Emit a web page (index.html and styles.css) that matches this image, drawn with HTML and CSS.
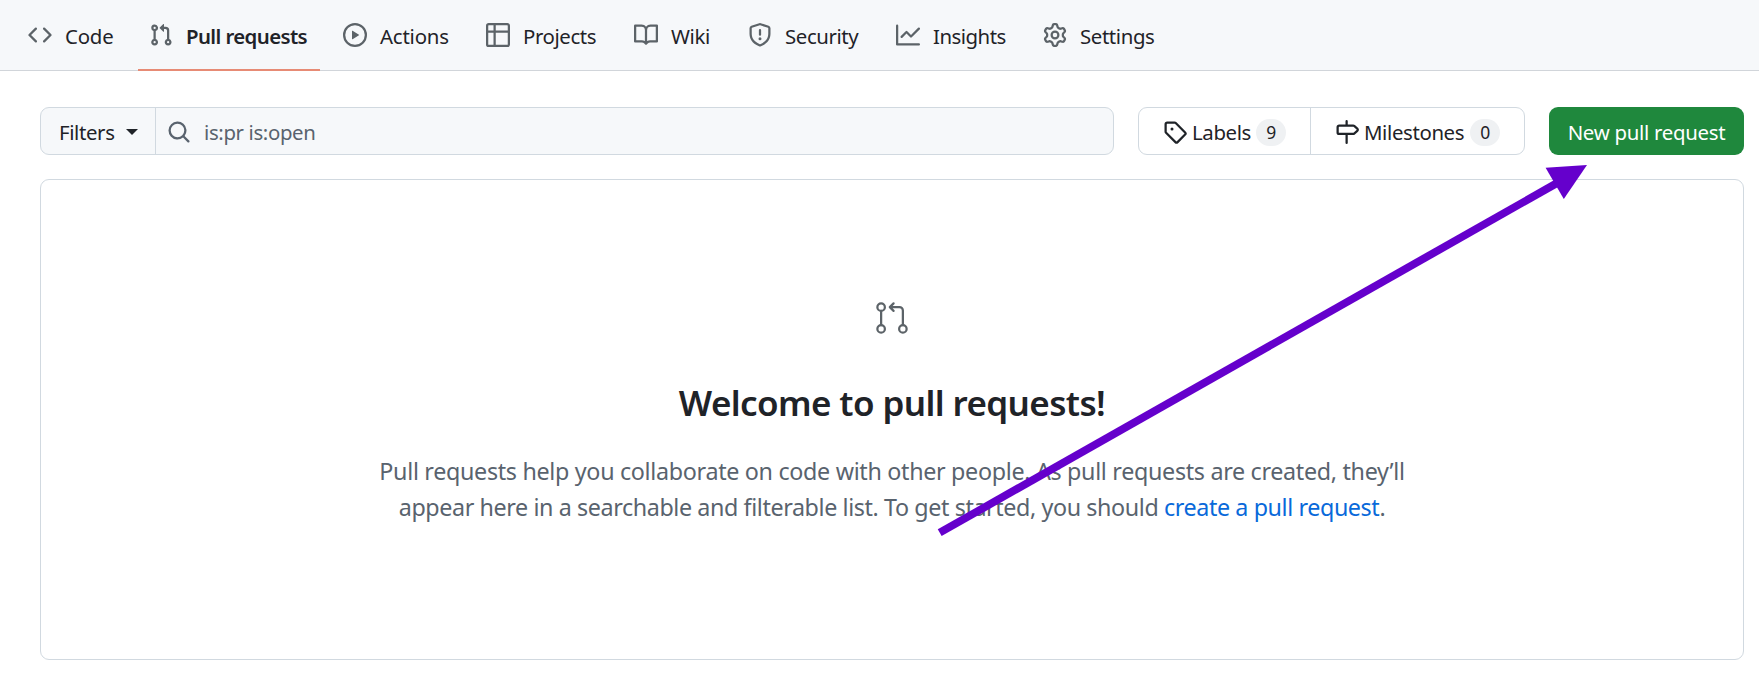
FILE: index.html
```html
<!DOCTYPE html>
<html lang="en">
<head>
<meta charset="utf-8">
<title>Pull requests</title>
<link rel="stylesheet" href="styles.css">
</head>
<body>
<nav class="nav">
  <a class="tab code"><svg class="icon" viewBox="0 0 16 16"><path d="m11.28 3.22 4.25 4.25a.75.75 0 0 1 0 1.06l-4.25 4.25a.749.749 0 0 1-1.275-.326.749.749 0 0 1 .215-.734L13.94 8l-3.72-3.72a.749.749 0 0 1 .326-1.275.749.749 0 0 1 .734.215Zm-6.56 0a.751.751 0 0 1 1.042.018.751.751 0 0 1 .018 1.042L2.06 8l3.72 3.72a.749.749 0 0 1-.326 1.275.749.749 0 0 1-.734-.215L.47 8.53a.75.75 0 0 1 0-1.06Z"/></svg><span>Code</span></a>
  <a class="tab pulls selected"><svg class="icon" viewBox="0 0 16 16"><path d="M1.5 3.25a2.25 2.25 0 1 1 3 2.122v5.256a2.251 2.251 0 1 1-1.5 0V5.372A2.25 2.25 0 0 1 1.5 3.25Zm5.677-.177L9.573.677A.25.25 0 0 1 10 .854V2.5h1A2.5 2.5 0 0 1 13.5 5v5.628a2.251 2.251 0 1 1-1.5 0V5a1 1 0 0 0-1-1h-1v1.646a.25.25 0 0 1-.427.177L7.177 3.427a.25.25 0 0 1 0-.354ZM3.75 2.5a.75.75 0 1 0 0 1.5.75.75 0 0 0 0-1.5Zm0 9.5a.75.75 0 1 0 0 1.5.75.75 0 0 0 0-1.5Zm8.25.75a.75.75 0 1 0 1.5 0 .75.75 0 0 0-1.5 0Z"/></svg><span>Pull requests</span></a>
  <a class="tab actions"><svg class="icon" viewBox="0 0 16 16"><path d="M8 0a8 8 0 1 1 0 16A8 8 0 0 1 8 0ZM1.5 8a6.5 6.5 0 1 0 13 0 6.5 6.5 0 0 0-13 0Zm4.879-2.773 4.264 2.559a.25.25 0 0 1 0 .428l-4.264 2.559A.25.25 0 0 1 6 10.559V5.442a.25.25 0 0 1 .379-.215Z"/></svg><span>Actions</span></a>
  <a class="tab projects"><svg class="icon" viewBox="0 0 16 16"><path d="M0 1.75C0 .784.784 0 1.75 0h12.5C15.216 0 16 .784 16 1.75v12.5A1.75 1.75 0 0 1 14.25 16H1.75A1.75 1.75 0 0 1 0 14.25ZM6.5 6.5v8h7.75a.25.25 0 0 0 .25-.25V6.5Zm8-1.5V1.75a.25.25 0 0 0-.25-.25H6.5V5Zm-13 1.5v7.75c0 .138.112.25.25.25H5v-8ZM5 5V1.5H1.75a.25.25 0 0 0-.25.25V5Z"/></svg><span>Projects</span></a>
  <a class="tab wiki"><svg class="icon" viewBox="0 0 16 16"><path d="M0 1.75A.75.75 0 0 1 .75 1h4.253c1.227 0 2.317.59 3 1.501A3.743 3.743 0 0 1 11.006 1h4.245a.75.75 0 0 1 .75.75v10.5a.75.75 0 0 1-.75.75h-4.507a2.25 2.25 0 0 0-1.591.659l-.622.621a.75.75 0 0 1-1.06 0l-.622-.621A2.25 2.25 0 0 0 5.258 13H.75a.75.75 0 0 1-.75-.75Zm7.251 10.324.004-5.073-.002-2.253A2.25 2.25 0 0 0 5.003 2.5H1.5v9h3.757a3.75 3.75 0 0 1 1.994.574ZM8.755 4.75l-.004 7.322a3.752 3.752 0 0 1 1.992-.572H14.5v-9h-3.495a2.25 2.25 0 0 0-2.25 2.25Z"/></svg><span>Wiki</span></a>
  <a class="tab security"><svg class="icon" viewBox="0 0 16 16"><path d="M7.467.133a1.748 1.748 0 0 1 1.066 0l5.25 1.68A1.75 1.75 0 0 1 15 3.48V7c0 1.566-.32 3.182-1.303 4.682-.983 1.498-2.585 2.813-5.032 3.855a1.697 1.697 0 0 1-1.33 0c-2.447-1.042-4.049-2.357-5.032-3.855C1.32 10.182 1 8.566 1 7V3.48a1.755 1.755 0 0 1 1.217-1.667Zm.61 1.429a.25.25 0 0 0-.153 0l-5.25 1.68a.25.25 0 0 0-.174.238V7c0 1.358.275 2.666 1.057 3.86.784 1.194 2.121 2.34 4.366 3.297a.196.196 0 0 0 .154 0c2.245-.956 3.582-2.104 4.366-3.298C13.225 9.666 13.5 8.36 13.5 7V3.48a.251.251 0 0 0-.174-.237l-5.25-1.68ZM8.75 4.75v3a.75.75 0 0 1-1.5 0v-3a.75.75 0 0 1 1.5 0ZM9 10.5a1 1 0 1 1-2 0 1 1 0 0 1 2 0Z"/></svg><span>Security</span></a>
  <a class="tab insights"><svg class="icon" viewBox="0 0 16 16"><path d="M1.5 1.75V13.5h13.75a.75.75 0 0 1 0 1.5H.75a.75.75 0 0 1-.75-.75V1.75a.75.75 0 0 1 1.5 0Zm14.28 2.53-5.25 5.25a.75.75 0 0 1-1.06 0L7 7.06 4.28 9.78a.751.751 0 0 1-1.042-.018.751.751 0 0 1-.018-1.042l3.25-3.25a.75.75 0 0 1 1.06 0L10 7.94l4.72-4.72a.751.751 0 0 1 1.042.018.751.751 0 0 1 .018 1.042Z"/></svg><span>Insights</span></a>
  <a class="tab settings"><svg class="icon" viewBox="0 0 16 16"><path d="M8 0a8.2 8.2 0 0 1 .701.031C9.444.095 9.99.645 10.16 1.29l.288 1.107c.018.066.079.158.212.224.231.114.454.243.668.386.123.082.233.09.299.071l1.103-.303c.644-.176 1.392.021 1.82.63.27.385.506.792.704 1.218.315.675.111 1.422-.364 1.891l-.814.806c-.049.048-.098.147-.088.294.016.257.016.515 0 .772-.01.147.038.246.088.294l.814.806c.475.469.679 1.216.364 1.891a7.977 7.977 0 0 1-.704 1.217c-.428.61-1.176.807-1.82.63l-1.102-.302c-.067-.019-.177-.011-.3.071a5.909 5.909 0 0 1-.668.386c-.133.066-.194.158-.211.224l-.29 1.106c-.168.646-.715 1.196-1.458 1.26a8.006 8.006 0 0 1-1.402 0c-.743-.064-1.289-.614-1.458-1.26l-.289-1.106c-.018-.066-.079-.158-.212-.224a5.738 5.738 0 0 1-.668-.386c-.123-.082-.233-.09-.299-.071l-1.103.303c-.644.176-1.392-.021-1.82-.63a8.12 8.12 0 0 1-.704-1.218c-.315-.675-.111-1.422.363-1.891l.815-.806c.05-.048.098-.147.088-.294a6.214 6.214 0 0 1 0-.772c.01-.147-.038-.246-.088-.294l-.815-.806C.635 6.045.431 5.298.746 4.623a7.92 7.92 0 0 1 .704-1.217c.428-.61 1.176-.807 1.82-.63l1.102.302c.067.019.177.011.3-.071.214-.143.437-.272.668-.386.133-.066.194-.158.211-.224l.29-1.106C6.009.645 6.556.095 7.299.03 7.53.01 7.764 0 8 0Zm-.571 1.525c-.036.003-.108.036-.137.146l-.289 1.105c-.147.561-.549.967-.998 1.189-.173.086-.34.183-.5.29-.417.278-.97.423-1.529.27l-1.103-.303c-.109-.03-.175.016-.195.045-.22.312-.412.644-.573.99-.014.031-.021.11.059.19l.815.806c.411.406.562.957.53 1.456a4.709 4.709 0 0 0 0 .582c.032.499-.119 1.05-.53 1.456l-.815.806c-.081.08-.073.159-.059.19.162.346.353.677.573.989.02.03.085.076.195.046l1.102-.303c.56-.153 1.113-.008 1.53.27.161.107.328.204.501.29.447.222.85.629.997 1.189l.289 1.105c.029.109.101.143.137.146a6.6 6.6 0 0 0 1.142 0c.036-.003.108-.036.137-.146l.289-1.105c.147-.561.549-.967.998-1.189.173-.086.34-.183.5-.29.417-.278.97-.423 1.529-.27l1.103.303c.109.029.175-.016.195-.045.22-.313.411-.644.573-.99.014-.031.021-.11-.059-.19l-.815-.806c-.411-.406-.562-.957-.53-1.456a4.709 4.709 0 0 0 0-.582c-.032-.499.119-1.05.53-1.456l.815-.806c.081-.08.073-.159.059-.19a6.464 6.464 0 0 0-.573-.989c-.02-.03-.085-.076-.195-.046l-1.102.303c-.56.153-1.113.008-1.53-.27a4.44 4.44 0 0 0-.501-.29c-.447-.222-.85-.629-.997-1.189l-.289-1.105c-.029-.11-.101-.143-.137-.146a6.6 6.6 0 0 0-1.142 0ZM11 8a3 3 0 1 1-6 0 3 3 0 0 1 6 0ZM9.5 8a1.5 1.5 0 1 0-3.001.001A1.5 1.5 0 0 0 9.5 8Z"/></svg><span>Settings</span></a>
</nav>

<main class="content">
  <div class="toolbar">
    <div class="search-group">
      <button class="filters"><span>Filters</span><i class="caret"></i></button>
      <div class="search"><svg class="icon" viewBox="0 0 16 16"><path d="M10.68 11.74a6 6 0 0 1-7.922-8.982 6 6 0 0 1 8.982 7.922l3.04 3.04a.749.749 0 0 1-.326 1.275.749.749 0 0 1-.734-.215ZM11.5 7a4.499 4.499 0 1 0-8.997 0A4.499 4.499 0 0 0 11.5 7Z"/></svg><span>is:pr is:open</span></div>
    </div>
    <div class="subnav">
      <a class="subnav-item labels"><svg class="icon" viewBox="0 0 16 16"><path d="M1 7.775V2.75C1 1.784 1.784 1 2.75 1h5.025c.464 0 .91.184 1.238.513l6.25 6.25a1.75 1.75 0 0 1 0 2.474l-5.026 5.026a1.75 1.75 0 0 1-2.474 0l-6.25-6.25A1.752 1.752 0 0 1 1 7.775Zm1.5 0c0 .066.026.13.073.177l6.25 6.25a.25.25 0 0 0 .354 0l5.025-5.025a.25.25 0 0 0 0-.354l-6.25-6.25a.25.25 0 0 0-.177-.073H2.75a.25.25 0 0 0-.25.25ZM6 5a1 1 0 1 1 0 2 1 1 0 0 1 0-2Z"/></svg><span class="name">Labels</span><span class="counter">9</span></a>
      <a class="subnav-item milestones"><svg class="icon" viewBox="0 0 16 16"><path d="M7.75 0a.75.75 0 0 1 .75.75V3h3.634c.414 0 .814.147 1.13.414l2.07 1.75a1.75 1.75 0 0 1 0 2.672l-2.07 1.75a1.75 1.75 0 0 1-1.13.414H8.5v5.25a.75.75 0 0 1-1.5 0V10H2.75A1.75 1.75 0 0 1 1 8.25v-3.5C1 3.784 1.784 3 2.75 3H7V.75A.75.75 0 0 1 7.75 0Zm4.384 8.5a.25.25 0 0 0 .161-.06l2.07-1.75a.248.248 0 0 0 0-.38l-2.07-1.75a.25.25 0 0 0-.161-.06H2.75a.25.25 0 0 0-.25.25v3.5c0 .138.112.25.25.25h9.384Z"/></svg><span class="name">Milestones</span><span class="counter">0</span></a>
    </div>
    <button class="primary"><span>New pull request</span></button>
  </div>

  <section class="blankslate">
    <svg class="hero" viewBox="0 0 24 24"><circle cx="4.75" cy="4.75" r="2.5"/><circle cx="4.75" cy="19.25" r="2.5"/><circle cx="19.25" cy="19.25" r="2.5"/><path d="M4.75 7.25v9.5M11 4.75h6a2.25 2.25 0 0 1 2.25 2.25v9.75M13.05 2.25l-2.5 2.5 2.5 2.5"/></svg>
    <h2>Welcome to pull requests!</h2>
    <p><span class="line first">Pull requests help you collaborate on code with other people. As pull requests are created, they’ll</span><br><span class="line second">appear here in a searchable and filterable list. To get started, you should <a>create a pull request</a>.</span></p>
  </section>
</main>

<svg class="arrow" viewBox="0 0 1759 673"><path class="shaft" d="M939.7 532.7 1558 182.5"/><path class="head" d="M1587 165 1545.6 167.7 1563.8 199Z"/></svg>
</body>
</html>
```
FILE: styles.css
```css
* { box-sizing: border-box; }
body {
  margin: 0;
  height: 673px;
  overflow: hidden;
  position: relative;
  background: #fff;
  color: #1f2328;
  font: 20.4px/30px "Noto Sans", "Open Sans", sans-serif;
}
.icon { width: 24px; height: 24px; flex: none; fill: currentColor; }

.nav {
  display: flex;
  gap: 12px;
  height: 71px;
  padding-left: 16px;
  background: #f6f8fa;
  border-bottom: 1px solid #d1d5da;
}
.tab {
  display: flex;
  flex: none;
  gap: 13px;
  height: 71px;
  padding: 21px 0 0 11px;
  white-space: nowrap;
}
.tab .icon { margin-top: 2px; color: #5c6368; }
.selected { font-weight: 600; border-bottom: 2px solid #e78b75; }
.code { width: 110px; padding-left: 12px; }
.pulls { width: 182px; }
.actions { width: 131px; }
.projects { width: 136px; }
.wiki { width: 102px; }
.security { width: 136px; }
.insights { width: 135px; }
.settings { width: 136px; }
.tab span { letter-spacing: -0.4px; }
.code span { letter-spacing: -0.2px; }
.pulls span { letter-spacing: -0.6px; }
.actions span { letter-spacing: -0.2px; }
.insights span { letter-spacing: -0.5px; }

.content { padding: 36px 15px 0 40px; }
.toolbar { display: flex; gap: 24px; height: 48px; letter-spacing: -0.37px; }
.search-group {
  display: flex;
  width: 1074px;
  background: #f6f8fa;
  border: 1px solid #d1d9e0;
  border-radius: 9px;
}
button { font: inherit; letter-spacing: inherit; color: inherit; border: 0; padding: 0; background: none; }
.filters {
  display: flex;
  align-items: center;
  width: 115px;
  padding: 2px 0 0 18px;
  border-right: 1px solid #d1d9e0;
}
.filters span { width: 67px; text-align: left; }
.caret {
  border: 6px solid transparent;
  border-top-color: #1f2328;
  border-bottom: 0;
}
.search { display: flex; align-items: center; gap: 13px; padding: 2px 0 0 11px; color: #59636e; }
.subnav {
  display: flex;
  width: 387px;
  border: 1px solid #d1d9e0;
  border-radius: 9px;
}
.subnav-item { display: flex; align-items: center; padding-top: 2px; }
.labels { width: 172px; padding-left: 24px; border-right: 1px solid #d1d9e0; }
.milestones { padding-left: 24px; }
.name { padding-left: 5px; width: 69px; white-space: nowrap; }
.milestones .name { width: 111px; }
.counter {
  width: 30px;
  height: 27px;
  border-radius: 14px;
  background: #eff1f3;
  font-size: 17.5px;
  line-height: 27px;
  text-align: center;
}
.primary {
  width: 195px;
  padding-top: 2px;
  border-radius: 9px;
  background: #1f883d;
  color: #fff;
  letter-spacing: -0.28px;
  white-space: nowrap;
}
.blankslate {
  display: flex;
  flex-direction: column;
  align-items: center;
  height: 481px;
  margin-top: 24px;
  padding-top: 120px;
  border: 1px solid #d1d9e0;
  border-radius: 9px;
  text-align: center;
}
.hero {
  width: 36px;
  height: 36px;
  fill: none;
  stroke: #5c6368;
  stroke-width: 1.5;
  stroke-linecap: round;
  stroke-linejoin: round;
}
h2 { margin: 40px 0 0; font-size: 35px; line-height: 54px; font-weight: 600; letter-spacing: -0.61px; white-space: nowrap; }
p { margin: 23px 0 0; font-size: 23.3px; line-height: 36px; color: #59636e; white-space: nowrap; }
.first { letter-spacing: -0.315px; }
.second { letter-spacing: -0.4px; }
p a { color: #0969da; }

/* Annotation laid over the page, pointing at the primary button */
.arrow { position: absolute; left: 0; top: 0; width: 1759px; height: 673px; pointer-events: none; }
.shaft { stroke: #6500cc; stroke-width: 7.8; }
.head { fill: #6500cc; }
```
